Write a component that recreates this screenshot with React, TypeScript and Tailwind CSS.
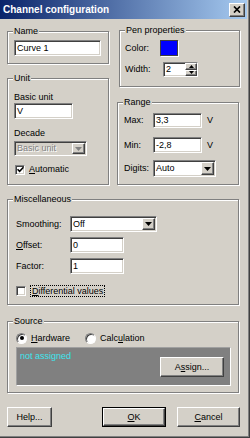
import React from "react";

const sunken =
  "border border-t-[#808080] border-l-[#808080] border-r-white border-b-white shadow-[inset_1px_1px_0_#404040,inset_-1px_-1px_0_#d4d0c8]";
const raised =
  "border border-t-white border-l-white border-r-[#404040] border-b-[#404040] shadow-[inset_-1px_-1px_0_#808080]";

function Group({ label, className, children }: { label: string; className: string; children?: React.ReactNode }) {
  return (
    <div className={`relative border border-[#808080] shadow-[1px_1px_0_#fff,inset_1px_1px_0_#fff] ${className}`}>
      <span className="absolute -top-[7px] left-[5px] bg-[#d4d0c8] px-[1px] leading-[12px]">{label}</span>
      {children}
    </div>
  );
}

function Field({ value, className }: { value: string; className: string }) {
  return (
    <div className={`${sunken} bg-white flex items-center pl-[2px] leading-[11px] ${className}`}>{value}</div>
  );
}

function Arrow({ color = "#000" }: { color?: string }) {
  return (
    <svg width="7" height="4" viewBox="0 0 7 4">
      <polygon points="0,0 7,0 3.5,4" fill={color} />
    </svg>
  );
}

function Combo({ value, className, disabled }: { value: string; className: string; disabled?: boolean }) {
  return (
    <div className={`${sunken} flex ${disabled ? "bg-[#d4d0c8]" : "bg-white"} ${className}`}>
      <div
        className={`flex-1 flex items-center pl-[2px] leading-[11px] ${
          disabled ? "text-[#808080] [text-shadow:1px_1px_0_#fff]" : ""
        }`}
      >
        {value}
      </div>
      <div className={`${raised} bg-[#d4d0c8] w-[13px] m-[1px] flex items-center justify-center`}>
        <Arrow color={disabled ? "#808080" : "#000"} />
      </div>
    </div>
  );
}

function Check({ checked }: { checked?: boolean }) {
  return (
    <div className={`${sunken} bg-white w-[10px] h-[10px] flex items-center justify-center shrink-0`}>
      {checked && (
        <svg width="7" height="7" viewBox="0 0 7 7">
          <path d="M0.5 3.2 L2.6 5.3 L6.5 1.2" stroke="#000" strokeWidth="1.6" fill="none" />
        </svg>
      )}
    </div>
  );
}

function Radio({ checked }: { checked?: boolean }) {
  return (
    <div className="w-[11px] h-[11px] rounded-full border border-t-[#808080] border-l-[#808080] border-r-white border-b-white bg-white shadow-[inset_1px_1px_0_#404040] flex items-center justify-center shrink-0">
      {checked && <div className="w-[4px] h-[4px] rounded-full bg-black" />}
    </div>
  );
}

function Btn({ children, className, def }: { children: React.ReactNode; className: string; def?: boolean }) {
  if (def) {
    return (
      <div className={`border border-black flex ${className}`}>
        <div className={`${raised} flex-1 flex items-center justify-center bg-[#d4d0c8]`}>{children}</div>
      </div>
    );
  }
  return <div className={`${raised} flex items-center justify-center bg-[#d4d0c8] ${className}`}>{children}</div>;
}

export default function App() {
  return (
    <div className="w-[250px] h-[438px] bg-[#d4d0c8] text-black text-[9px] leading-[11px] font-['Liberation_Sans',Arial,sans-serif] shadow-[inset_-1px_-1px_0_#404040,inset_-2px_-2px_0_#808080] overflow-hidden">
      {/* Title bar */}
      <div className="w-[247px] h-[19px] flex items-center bg-[linear-gradient(to_right,#0a246a,#a6caf0)]">
        <span className="pl-[3px] text-white font-bold text-[10px] leading-[12px]">Channel configuration</span>
        <div className={`${raised} ml-auto mr-[2px] w-[16px] h-[14px] bg-[#d4d0c8] flex items-center justify-center`}>
          <svg width="8" height="7" viewBox="0 0 8 7">
            <path d="M1 0.5 L7 6.5 M7 0.5 L1 6.5" stroke="#000" strokeWidth="1.7" />
          </svg>
        </div>
      </div>

      <div className="px-[7px]">
        <div className="flex items-start">
          {/* Left column */}
          <div className="w-[102px] mt-[12px] flex flex-col">
            <Group label="Name" className="h-[33px] pl-[6px] pt-[8px]">
              <Field value="Curve 1" className="w-[87px] h-[16px]" />
            </Group>
            <Group label="Unit" className="mt-[14px] h-[107px] px-[6px] pt-[12px] flex flex-col">
              <div className="h-[12px] leading-[12px]">Basic unit</div>
              <Field value="V" className="w-[59px] h-[16px]" />
              <div className="mt-[8px] h-[12px] leading-[12px]">Decade</div>
              <Combo value="Basic unit" disabled className="mt-[2px] w-[73px] h-[15px]" />
              <div className="mt-[8px] h-[11px] flex items-center ml-[1px]">
                <Check checked />
                <span className="ml-[4px]">
                  <span className="underline">A</span>utomatic
                </span>
              </div>
            </Group>
          </div>

          {/* Right column */}
          <div className="ml-[10px] flex flex-col">
            <Group label="Pen properties" className="mt-[11px] w-[121px] h-[57px] pl-[5px] pt-[9px]">
              <div className="h-[16px] flex items-center">
                <span className="w-[35px]">Color:</span>
                <div className="w-[18px] h-[16px] bg-[#0000ff] border border-[#404040] shadow-[1px_1px_0_#fff]" />
              </div>
              <div className="mt-[6px] h-[15px] flex items-center">
                <span className="w-[38px]">Width:</span>
                <div className={`${sunken} bg-white w-[35px] h-[15px] flex`}>
                  <div className="flex-1 flex items-center pl-[2px]">2</div>
                  <div className="w-[12px] flex flex-col">
                    <div className={`${raised} flex-1 bg-[#d4d0c8] flex items-center justify-center`}>
                      <svg width="5" height="3" viewBox="0 0 5 3">
                        <polygon points="0,3 5,3 2.5,0" fill="#000" />
                      </svg>
                    </div>
                    <div className={`${raised} flex-1 bg-[#d4d0c8] flex items-center justify-center`}>
                      <svg width="5" height="3" viewBox="0 0 5 3">
                        <polygon points="0,0 5,0 2.5,3" fill="#000" />
                      </svg>
                    </div>
                  </div>
                </div>
              </div>
            </Group>
            <Group label="Range" className="-ml-[2px] mt-[15px] w-[122px] h-[83px] pl-[6px] pt-[10px]">
              <div className="h-[15px] flex items-center">
                <span className="w-[29px]">Max:</span>
                <Field value="3,3" className="w-[49px] h-[15px]" />
                <span className="ml-[5px]">V</span>
              </div>
              <div className="mt-[9px] h-[16px] flex items-center">
                <span className="w-[29px]">Min:</span>
                <Field value="-2,8" className="w-[49px] h-[16px]" />
                <span className="ml-[5px]">V</span>
              </div>
              <div className="mt-[7px] h-[17px] flex items-center">
                <span className="w-[29px]">Digits:</span>
                <Combo value="Auto" className="w-[63px] h-[17px]" />
              </div>
            </Group>
          </div>
        </div>

        <Group label="Miscellaneous" className="mt-[14px] w-[232px] h-[106px] pl-[8px] pt-[16px]">
          <div className="h-[16px] flex items-center">
            <span className="w-[54px]">Smoothing:</span>
            <Combo value="Off" className="w-[87px] h-[16px]" />
          </div>
          <div className="mt-[5px] h-[16px] flex items-center">
            <span className="w-[54px]">
              <span className="underline">O</span>ffset:
            </span>
            <Field value="0" className="w-[54px] h-[16px]" />
          </div>
          <div className="mt-[5px] h-[16px] flex items-center">
            <span className="w-[54px]">Factor:</span>
            <Field value="1" className="w-[54px] h-[16px]" />
          </div>
          <div className="mt-[11px] h-[12px] flex items-center">
            <Check />
            <span className="ml-[4px] border border-dotted border-black px-[1px] leading-[10px]">
              <span className="underline">D</span>ifferential values
            </span>
          </div>
        </Group>

        <Group label="Source" className="mt-[16px] w-[232px] h-[72px] pl-[8px] pt-[10px]">
          <div className="h-[12px] flex items-center">
            <div className="w-[69px] flex items-center">
              <Radio checked />
              <span className="ml-[4px]">
                <span className="underline">H</span>ardware
              </span>
            </div>
            <Radio />
            <span className="ml-[4px]">
              Calc<span className="underline">u</span>lation
            </span>
          </div>
          <div className="mt-[3px] w-[215px] h-[39px] bg-[#808080] border border-t-[#a0a0a0] border-l-[#a0a0a0] border-r-white border-b-white flex justify-between items-start">
            <span className="pl-[3px] pt-[3px] text-[#3ee6ee]">not assigned</span>
            <Btn className="mt-[9px] mr-[6px] w-[64px] h-[20px]">
              <span>
                A<span className="underline">s</span>sign...
              </span>
            </Btn>
          </div>
        </Group>

        <div className="mt-[14px] h-[20px] flex">
          <Btn className="w-[45px] h-[20px]">Help...</Btn>
          <Btn def className="ml-[50px] w-[64px] h-[20px]">
            <span>
              <span className="underline">O</span>K
            </span>
          </Btn>
          <Btn className="ml-[11px] w-[63px] h-[20px]">
            <span>
              <span className="underline">C</span>ancel
            </span>
          </Btn>
        </div>
      </div>
    </div>
  );
}
